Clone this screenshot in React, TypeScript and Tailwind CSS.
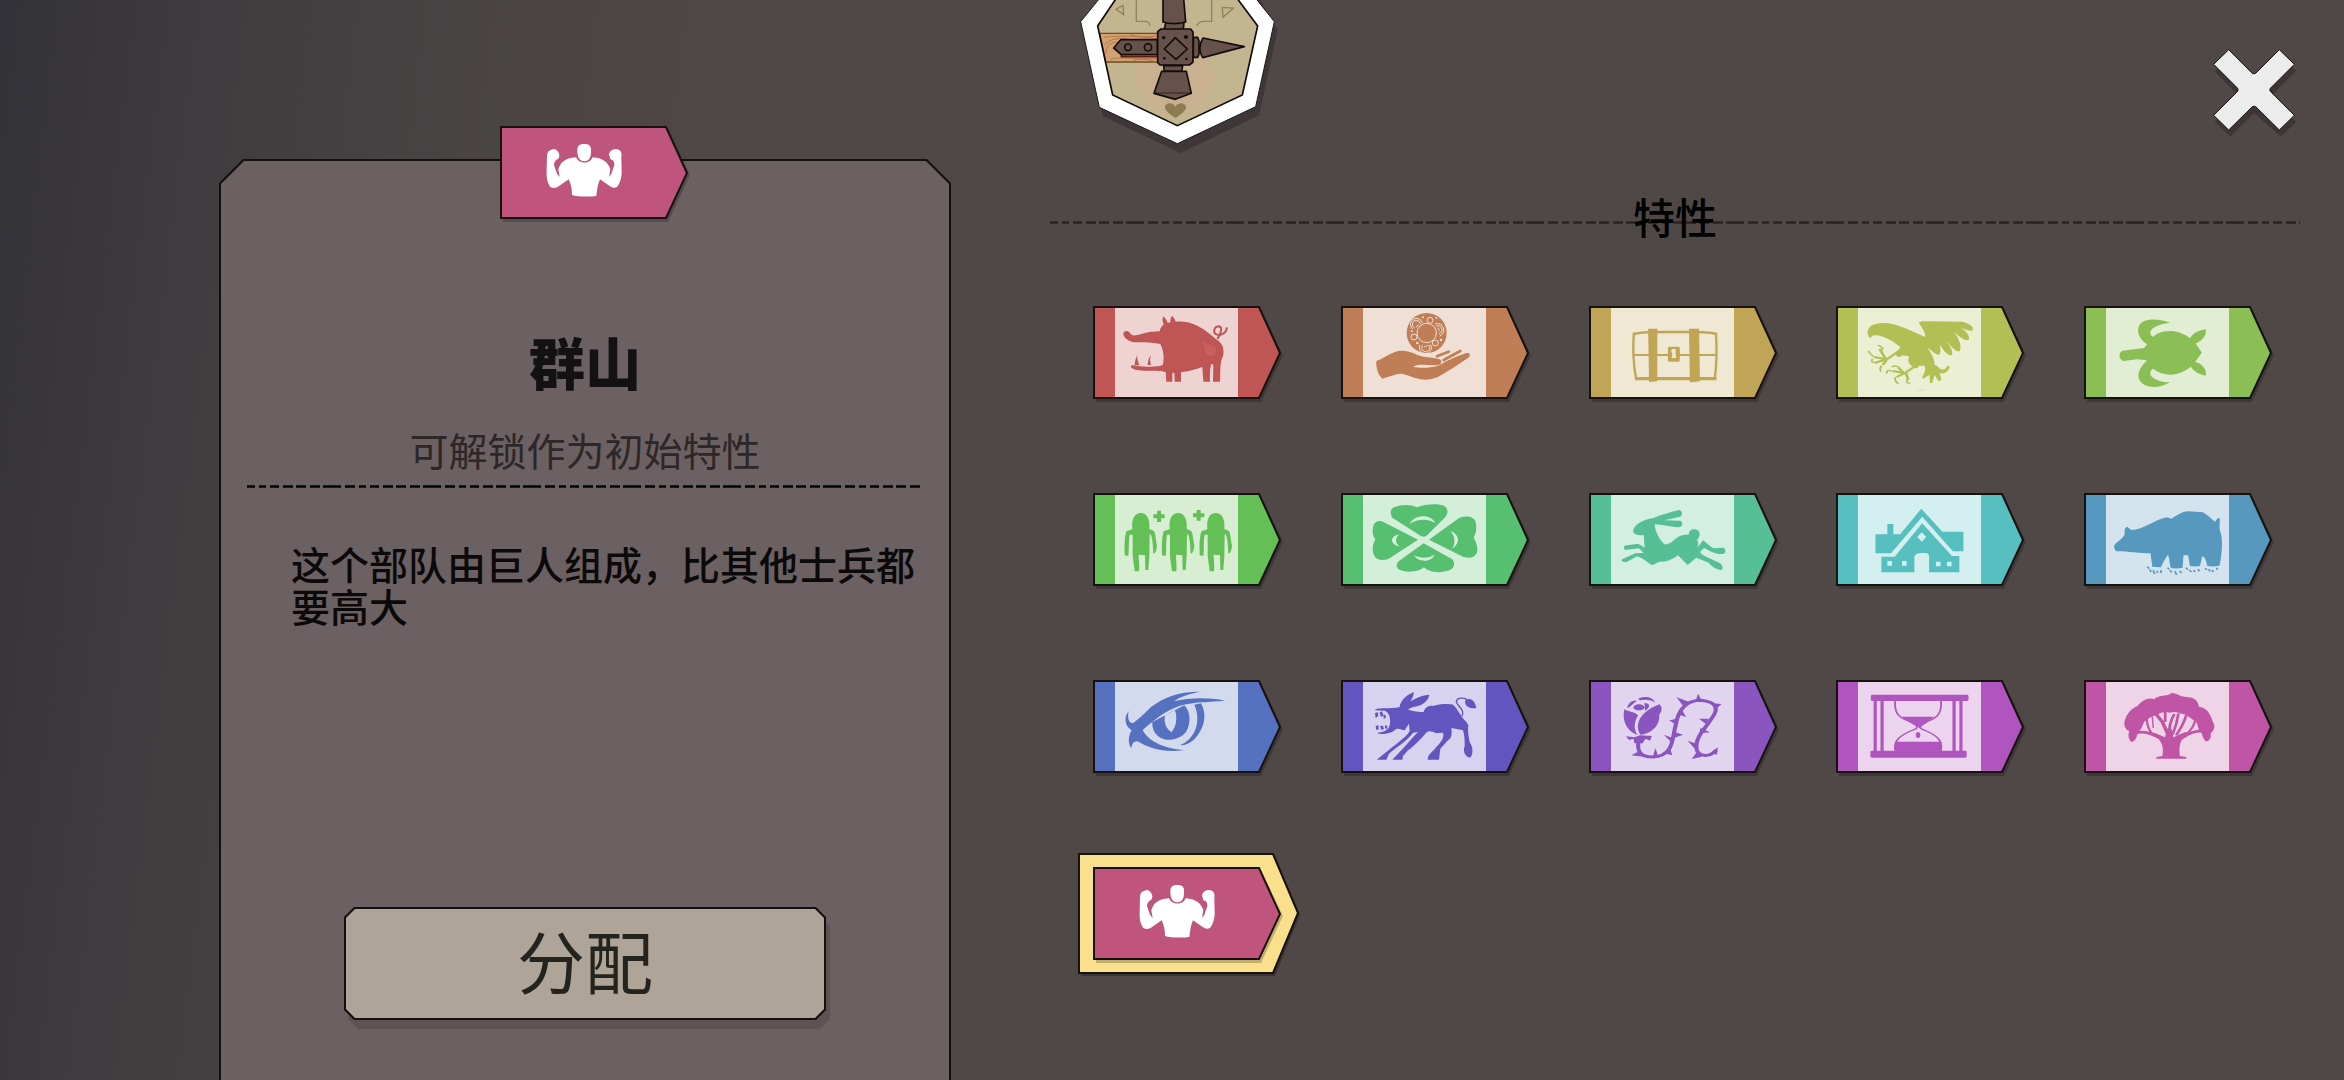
import type { ReactNode } from "react";

type Trait = {
  name: string;
  color: string;
  light: string;
  viewBox: string;
  art: ReactNode;
};

const person =
  "M159 150C156 115 168 101 184 101C202 101 213 118 210 150C222 152 228 156 229 175L233 200C232 212 228 225 222 222C220 205 222 185 214 165L211 165L210 228C210 240 208 255 207 272L198 272L197 228L178 226C178 245 181 260 179 276L166 276C164 255 160 240 160 225L160 166L151 166C147 185 150 205 147 230L136 228C135 200 135 175 141 156Z";

const giant: Trait = {
  name: "群山",
  color: "#bf557d",
  light: "#bf557d",
  viewBox: "102 87 564 279",
  art: (
    <g fill="#fff">
      <path d="M334 160C334 145 342 141 355 141C368 141 376 145 375 160C376 180 370 193 355 193C340 193 334 180 334 160Z" />
      <path d="M330 181C338 202 372 202 380 181C410 183 425 195 433 216L429 240L436 230L445 205C446 195 442 189 434 187C430 185 434 180 429 175C430 162 438 157 450 156C464 158 468 165 466 180L467 225C467 245 460 262 453 270C445 274 438 272 432 268L402 247C395 262 393 280 391 296C375 300 335 300 318 294C318 275 315 262 308 247L278 268C270 274 260 274 253 270C243 255 241 240 242 220L243 175C245 162 252 158 265 156C276 160 284 172 278 184C268 190 264 195 264 205L273 230L281 240L277 217C283 198 295 183 330 181Z" />
    </g>
  ),
};

const traits: Trait[] = [
  {
    name: "野猪",
    color: "#bf5554",
    light: "#efd3d3",
    viewBox: "41 49 564 279",
    art: (
      <>
        <path d="M132 132C134 122 146 122 152 130C156 138 166 140 185 133C205 127 225 125 241 125C244 112 250 107 253 104C248 95 250 86 251 80C258 85 263 92 265 100L274 97C271 90 276 82 278 78C284 84 288 90 289 96C310 94 335 98 355 109C375 119 395 135 412 150C430 160 436 178 431 200C426 210 424 220 423 240L422 276L401 276L402 225L396 222C393 230 391 250 392 276L372 276L369 232C350 240 325 245 305 248L305 276L286 276L285 250L279 249L279 276L261 276L259 247C245 243 235 244 215 243C190 244 160 243 155 232C154 226 160 226 170 228C200 232 235 233 250 226C256 205 252 180 243 163C220 158 195 157 165 158C150 155 132 145 132 132Z" />
        <path
          d="M414 148C420 138 428 125 425 114C420 107 408 110 405 120C402 132 412 138 425 135C436 131 442 124 443 113"
          fill="none"
          stroke="#bf5554"
          strokeWidth="6"
        />
        <path d="M166 226C167 215 168 207 173 198C174 208 176 216 180 227ZM205 226C206 212 208 205 215 197C211 207 212 217 215 226Z" />
        <path d="M370 153L385 163L412 175L405 195L390 200L378 188Z" fill="#c66160" />
      </>
    ),
  },
  {
    name: "施舍",
    color: "#bf7e55",
    light: "#efdfd4",
    viewBox: "784 49 564 279",
    art: (
      <>
        <circle cx="1041" cy="130" r="60" />
        <g fill="none" stroke="#efdfd4" strokeWidth="3">
          <circle cx="1041" cy="130" r="29" />
          <circle cx="1051" cy="92" r="9" />
          <circle cx="1003" cy="142" r="9" />
          <circle cx="1067" cy="160" r="9" />
          <path d="M999 118A18 18 0 1 1 1028 100M1005 115A12 12 0 1 1 1022 104M1011 113A6 6 0 0 1 1017 107" />
          <path d="M1066 103A18 18 0 1 1 1080 139M1069 110A12 12 0 1 1 1078 132M1073 115A6 6 0 0 1 1077 125" />
          <path d="M1053 165A18 18 0 1 1 1021 166M1047 166A12 12 0 1 1 1028 168M1043 167A6 6 0 0 1 1033 169" />
        </g>
        <g fill="#efdfd4">
          <circle cx="1030" cy="83" r="3" />
          <circle cx="1070" cy="84" r="3" />
          <circle cx="996" cy="124" r="3" />
          <circle cx="1013" cy="160" r="4" />
          <circle cx="1084" cy="151" r="4" />
        </g>
        <path d="M890 214C910 208 930 190 955 184C980 180 1000 188 1015 197C1035 205 1065 202 1083 210C1090 220 1080 228 1060 227C1040 227 1020 222 1000 231C1020 236 1050 235 1075 228C1085 225 1092 218 1100 215C1125 203 1145 195 1160 190C1172 188 1174 198 1165 205C1135 225 1105 245 1075 262C1050 272 1030 272 1010 266C990 260 975 252 962 252C945 254 925 262 908 267C895 255 889 235 890 214Z" />
        <path
          d="M1072 200L1107 186M1092 211L1142 184"
          stroke="#bf7e55"
          strokeWidth="8"
          strokeLinecap="round"
        />
      </>
    ),
  },
  {
    name: "宝箱",
    color: "#bfa555",
    light: "#efe8d3",
    viewBox: "41 49 410 279",
    art: (
      <>
        <g fill="none" stroke="#bfa555" strokeWidth="5">
          <path d="M139 130C136 175 138 225 144 270M318 130C320 180 320 225 315 268" />
          <path d="M137 196H317" strokeWidth="6" />
          <path d="M137 133C160 126 180 127 228 127S300 126 320 133" strokeWidth="8" />
          <path d="M141 267H319" strokeWidth="10" />
        </g>
        <path d="M170 117H190V275L172 277ZM259 117H281L283 275L261 278Z" />
        <rect x="213" y="171" width="26" height="45" rx="4" />
        <path d="M222 178H230V193L231 205H221L223 193L220 184Z" fill="#efe8d3" />
      </>
    ),
  },
  {
    name: "猎鹰",
    color: "#b1bf55",
    light: "#ebefd4",
    viewBox: "580 49 410 279",
    art: (
      <>
        <path d="M649 130C648 108 665 98 690 100C720 105 745 125 775 142C775 125 765 110 761 100C762 95 768 95 780 95L855 96C870 100 882 112 878 122C872 126 860 118 852 114C865 125 875 142 868 152C855 152 845 135 838 128C848 145 855 170 850 184C840 190 828 165 822 152C828 170 836 185 833 196C822 200 812 175 806 165C808 178 810 190 804 195C795 195 788 180 780 175C790 195 795 210 795 225L803 232C810 245 822 240 822 228L828 230C826 248 815 254 806 250L810 272L803 274L795 255L790 280L785 280L784 255L770 268L768 262C775 245 776 235 773 228L762 228C755 240 750 235 748 232C738 222 735 212 740 200L725 197C715 208 708 200 712 185C718 178 722 175 718 170C705 155 690 143 670 137C660 135 655 140 657 146C652 143 649 137 649 130Z" />
        <g fill="none" stroke="#b1bf55" strokeWidth="6">
          <path d="M714 187L688 212M688 206L675 178M688 208L663 202M690 208L665 220M690 212L682 226" />
          <path d="M681 182C684 174 678 169 671 167M662 200C656 196 653 188 650 184M665 218C658 220 656 212 660 208M680 228C674 234 676 240 678 246" strokeWidth="4" />
          <path d="M750 232L728 252M728 250L716 234M728 250L704 244M728 252L712 262M732 250L738 270" />
          <path d="M718 234C712 228 706 228 702 232M702 246C694 238 690 244 690 252M710 262C706 270 710 276 716 282M736 268C732 276 736 282 742 280" strokeWidth="4" />
        </g>
        <path d="M758 301H776" stroke="#d6dea4" strokeWidth="2" />
      </>
    ),
  },
  {
    name: "海龟",
    color: "#8bbf55",
    light: "#e1eed4",
    viewBox: "1119 49 410 279",
    art: (
      <>
        <path d="M1256 165C1270 130 1290 123 1310 124C1335 127 1352 145 1362 160L1376 189L1366 208C1350 240 1330 255 1305 255C1280 253 1262 235 1255 212L1235 209L1205 214C1195 208 1193 190 1203 183L1250 175Z" />
        <path d="M1258 165C1240 150 1232 125 1240 105C1250 88 1275 84 1307 99C1290 102 1268 110 1264 125C1262 138 1270 145 1279 148Z" />
        <path d="M1256 213C1240 232 1234 255 1240 272C1250 295 1280 300 1307 278C1290 278 1268 270 1264 255C1262 243 1268 238 1276 233Z" />
        <path d="M1348 152C1355 130 1370 122 1385 119C1386 135 1380 152 1362 162ZM1348 224C1357 245 1370 255 1385 258C1386 240 1380 225 1362 216Z" />
      </>
    ),
  },
  {
    name: "人多势众",
    color: "#64bf57",
    light: "#d7eed2",
    viewBox: "41 41 564 279",
    art: (
      <>
        <path d={person} />
        <path d={person} transform="translate(112)" />
        <path d={person} transform="translate(225)" />
        <path
          d="M222 111H256M239 94V128M341 108H375M358 92V124"
          stroke="#64bf57"
          strokeWidth="12"
        />
      </>
    ),
  },
  {
    name: "四叶草",
    color: "#57bf70",
    light: "#d3efda",
    viewBox: "784 41 564 279",
    art: (
      <>
        <path d="M1020 168L938 115C930 100 932 88 945 83C965 76 990 74 1012 84C1035 74 1070 72 1090 78C1108 86 1106 105 1095 115L1040 170Q1030 175 1020 168Z" />
        <path d="M1048 181L1135 118C1150 108 1180 108 1187 125C1192 145 1190 160 1182 175C1190 190 1196 205 1192 220C1180 240 1165 236 1150 232Z" />
        <path d="M1032 192L1118 240C1126 250 1125 262 1115 270C1095 280 1055 285 1033 264C1015 280 975 280 957 270C948 262 950 252 958 245Z" />
        <path d="M1015 181L910 127C895 122 882 128 880 145C877 160 880 170 887 180C878 195 877 215 884 230C890 242 905 245 925 240Z" />
        <path
          d="M990 133C1005 105 1055 103 1067 132C1050 118 1015 117 990 133ZM1003 228C1015 250 1055 250 1065 226C1048 237 1022 238 1003 228ZM958 165C930 172 930 195 960 202C945 190 947 178 958 165ZM1113 155C1140 165 1143 192 1118 208C1128 190 1126 172 1113 155Z"
          fill="#d3efda"
        />
      </>
    ),
  },
  {
    name: "野兔",
    color: "#57bf96",
    light: "#d3efe3",
    viewBox: "41 41 410 279",
    art: (
      <path d="M137 155C140 135 160 120 180 117C200 105 220 98 238 92C246 95 245 108 240 112L205 123L240 124C248 130 245 142 236 144C215 142 200 136 184 135C186 160 195 180 205 195C220 198 228 175 240 170C248 165 255 168 259 165C258 152 268 147 278 152C285 160 283 172 277 182C280 190 280 198 277 205L290 183C298 190 302 200 312 207L335 205C341 212 338 222 333 224C318 226 300 212 292 206L283 218C290 232 310 240 325 250C334 258 334 268 330 272C318 270 305 258 302 250L275 235L256 257L235 228C225 240 205 250 195 247L178 258L160 240C150 232 145 228 140 235L122 249C112 248 108 242 118 237L142 222L160 221L150 207L120 212C114 205 118 197 125 198L148 193L163 205C160 190 162 175 160 167C150 170 138 165 137 155Z" />
    ),
  },
  {
    name: "家园",
    color: "#57bfbf",
    light: "#d3efef",
    viewBox: "580 41 410 279",
    art: (
      <>
        <path d="M666 165H692V134H705V165H720L766 88L812 157H858V216H835L768 112L700 222H666Z" />
        <path d="M768 132L833 230H849V279H783V230C783 222 778 221 770 221C757 221 751 225 751 235V279H679V232H708Z" />
        <path
          d="M767 159L777 173L767 187L757 173ZM692 245H702V259H692ZM724 245H734V259H724ZM798 247H808V261H798ZM822 247H832V261H822Z"
          fill="#d3efef"
        />
      </>
    ),
  },
  {
    name: "巨熊",
    color: "#5798bf",
    light: "#d3e4ef",
    viewBox: "1119 41 410 279",
    art: (
      <>
        <path d="M1185 200C1186 190 1200 185 1208 165C1206 150 1210 142 1214 143L1222 152C1250 152 1270 122 1300 114L1310 118C1325 105 1335 95 1348 96L1378 99C1388 105 1395 118 1405 127C1410 115 1415 113 1415 118C1416 135 1413 145 1416 155C1422 180 1421 215 1415 258C1410 262 1400 262 1388 260C1385 245 1384 235 1377 231L1372 260C1365 262 1358 262 1350 260L1346 228L1336 228L1334 265C1325 268 1315 268 1308 265C1305 245 1305 235 1302 226C1296 240 1290 250 1287 264L1268 262L1264 222C1240 222 1210 215 1190 216C1186 212 1184 205 1185 200Z" />
        <path
          d="M1257 262l4 6M1263 271l2 7M1270 273l3 11M1278 274l2 6M1287 273v8M1301 265l4 5M1307 273l3 6M1317 276l4 10M1328 274l3 7M1341 265l5 6M1349 272l4 6M1358 272l3 6M1368 269l2 7M1383 266l4 6M1391 270l3 6M1398 272l3 6M1409 265v6"
          stroke="#5798bf"
          strokeWidth="4"
        />
      </>
    ),
  },
  {
    name: "鹰眼",
    color: "#5571bf",
    light: "#d4daee",
    viewBox: "41 34 564 279",
    art: (
      <>
        <path d="M148 127C143 150 150 165 162 163C180 150 200 130 215 115C255 85 300 68 364 69C330 75 300 85 284 98C330 86 390 86 437 96C390 100 350 100 320 107C270 118 235 145 190 184C205 215 250 240 315 244C260 254 210 240 175 218C160 218 158 228 156 239C145 225 147 200 157 185C140 175 130 150 148 127Z" />
        <path d="M219 160L315 110C335 130 335 165 320 190C300 215 260 220 240 205C225 195 218 180 219 160Z" />
        <path d="M257 140L287 125C295 150 290 175 276 191C262 180 252 165 257 140Z" fill="#d4daee" />
        <path d="M345 108L365 104C385 140 375 180 345 212C330 225 315 232 303 229C340 215 370 165 345 108Z" />
      </>
    ),
  },
  {
    name: "倔驴",
    color: "#6255bf",
    light: "#d7d2ef",
    viewBox: "784 34 564 279",
    art: (
      <>
        <path d="M887 122C900 115 930 122 960 115C962 100 975 80 1003 70C1000 90 990 105 978 114C990 95 1020 80 1049 78C1045 100 1025 112 1000 115L985 122C1000 130 1020 130 1032 130C1035 115 1050 108 1062 112C1080 105 1105 105 1120 108C1135 120 1140 140 1160 160L1166 170C1164 185 1166 200 1170 220C1180 235 1182 255 1172 267C1158 265 1148 250 1155 232C1155 215 1155 200 1150 185L1115 178C1118 195 1115 210 1105 215L1082 240L1078 273H1044C1045 255 1060 250 1070 235C1085 220 1095 205 1090 192L1070 194C1058 188 1050 185 1042 190C1020 215 1000 235 985 245L970 262L968 273H938L960 250C980 230 1000 205 1015 190L1000 192C985 215 950 235 928 255L920 273H891L920 250C950 225 975 210 990 188L988 165L975 185C965 185 955 175 945 185C930 198 900 198 893 193C905 190 925 190 930 170C935 150 928 130 915 126L887 125Z" />
        <path d="M886 134l8 -4l2 12l-8 6ZM899 132l8 -4l4 12l-6 5ZM911 138l6 0l2 10l-7 2ZM888 172l8 -3l1 13l-7 2ZM901 172l9 -1l3 10l-8 3ZM916 170l7 1l-1 10l-6 -2Z" />
        <path
          d="M1146 143C1158 125 1135 115 1130 100C1130 88 1145 85 1162 92"
          fill="none"
          stroke="#6255bf"
          strokeWidth="4"
        />
        <path d="M1157 95C1170 86 1185 92 1190 118C1175 122 1152 115 1157 95Z" />
      </>
    ),
  },
  {
    name: "荆棘玫瑰",
    color: "#8a55bf",
    light: "#e1d4ee",
    viewBox: "41 34 410 279",
    art: (
      <>
        <path d="M118 122C128 130 142 130 148 140C139 160 138 182 147 199C126 190 112 160 118 122ZM195 107C202 118 200 130 194 138C197 165 180 195 153 198C140 170 150 130 195 107Z" />
        <path d="M125 119C124 105 136 94 145 96L132 112ZM148 90C160 80 182 84 185 102C175 92 165 92 152 95ZM162 103C175 104 176 116 163 126Z" />
        <ellipse cx="150" cy="116" rx="12" ry="9" />
        <path d="M122 203L140 206L152 200L178 202L174 216L164 210L158 224L140 224L138 210L128 214Z" />
        <g fill="none" stroke="#8a55bf" strokeWidth="9">
          <path d="M150 215C144 245 152 265 180 265C228 262 222 205 230 170C236 120 255 95 285 95C320 100 325 120 308 150C295 180 275 200 275 235C276 265 305 268 318 245" />
        </g>
        <path d="M245 110L232 86L260 100ZM274 94L279 75L286 94ZM310 104L330 106L318 122ZM233 150L216 155L229 167ZM241 118L253 145L237 138ZM302 150L281 150L296 166ZM284 178L305 191L282 194ZM276 225L256 216L272 240ZM222 222L204 198L228 210ZM228 190L246 198L226 208ZM180 264L186 238L192 264ZM204 254L223 260L216 234ZM150 248L133 260L160 264ZM275 252L265 271L288 264ZM306 252L322 236L320 258Z" />
      </>
    ),
  },
  {
    name: "沙漏",
    color: "#b055bf",
    light: "#ecd3ee",
    viewBox: "580 34 410 279",
    art: (
      <>
        <rect x="656" y="78" width="213" height="19" rx="4" />
        <rect x="655" y="246" width="210" height="21" rx="4" />
        <path d="M662 97h7v150h-7ZM677 97h7v150h-7ZM834 97h7v150h-7ZM849 97h7v150h-7Z" />
        <g fill="none" stroke="#b055bf" strokeWidth="4">
          <path d="M709 97C707 130 715 145 735 155L755 170C759 178 755 180 748 184C720 200 705 215 709 246" />
          <path d="M809 97C811 130 803 145 785 155L765 170C761 178 765 180 772 184C800 200 813 215 809 246" />
        </g>
        <path d="M722 144H794L762 178ZM709 219H810V248H709Z" />
        <ellipse cx="759" cy="199" rx="5" ry="9" />
      </>
    ),
  },
  {
    name: "大树",
    color: "#bf55a4",
    light: "#efd3e7",
    viewBox: "1119 34 410 279",
    art: (
      <>
        <path d="M1222 220C1215 210 1215 195 1218 188C1205 180 1205 160 1210 148C1215 130 1225 118 1236 112C1245 95 1260 85 1272 92C1280 78 1300 84 1310 73C1325 75 1330 85 1343 85C1360 85 1368 98 1370 115C1385 115 1395 135 1400 160C1408 175 1400 188 1395 195C1398 210 1390 218 1385 218C1378 210 1378 200 1374 190C1366 186 1370 170 1362 158C1352 150 1346 140 1334 136C1322 130 1316 128 1306 132C1296 128 1288 130 1278 140C1266 142 1258 152 1250 160C1246 172 1244 184 1236 190C1235 210 1228 220 1222 220Z" />
        <path d="M1277 265L1290 262C1293 240 1290 225 1282 212L1262 196L1272 192L1296 206L1300 180H1310L1314 206L1340 190L1350 196L1332 214C1326 230 1327 248 1328 262L1342 265V270H1277Z" />
        <g fill="none" stroke="#bf55a4" strokeWidth="6">
          <path d="M1232 192Q1255 186 1275 202M1384 188Q1358 184 1336 204" strokeWidth="8" />
          <path d="M1256 150Q1256 175 1268 196M1362 152Q1358 178 1344 194" strokeWidth="5" />
          <path d="M1276 136L1290 160L1303 200" strokeWidth="8" />
          <path d="M1296 130V160M1306 200Q1302 170 1316 136M1325 134Q1322 165 1312 198M1342 140Q1336 168 1320 200" />
          <path d="M1268 144L1270 178" strokeWidth="3" />
        </g>
      </>
    ),
  },
  giant,
];

function TraitFlag({ trait, selected = false }: { trait: Trait; selected?: boolean }) {
  return (
    <svg viewBox="0 0 188 93" className="block h-[93px] w-[188px] overflow-visible" aria-hidden="true">
      {selected && (
        <>
          <path d="M-12 -11H182L207 48L182 109H-12Z" fill="#3a3333" />
          <path d="M-14 -13H180L205 46L180 106H-14Z" fill="#fadf8d" stroke="#17120c" strokeWidth="2" />
        </>
      )}
      <path d="M3 3H168L190 49L168 96H3Z" fill="#000" opacity="0.22" />
      <path d="M1 1H166L187 47L166 92H1Z" fill={trait.color} />
      <path d="M22 1H145V92H22Z" fill={trait.light} />
      <svg width="188" height="93" viewBox={trait.viewBox} preserveAspectRatio="none" fill={trait.color}>
        {trait.art}
      </svg>
      <path d="M1 1H166L187 47L166 92H1Z" fill="none" stroke="#17120f" strokeWidth="2" />
    </svg>
  );
}

function DashedRule({ className }: { className: string }) {
  return (
    <svg className={`block h-[3px] w-full ${className}`} aria-hidden="true">
      <line
        x1="0"
        y1="1.5"
        x2="100%"
        y2="1.5"
        stroke="currentColor"
        strokeWidth="2.5"
        strokeDasharray="10 4 7 4 9 4 10 3 10 4 10 3 18 4"
        strokeDashoffset="2"
      />
    </svg>
  );
}

function Medal() {
  return (
    <svg viewBox="0 0 720 480" className="block h-[160px] w-[240px]" aria-hidden="true">
      <path d="M130 0L72 92L128 348L362 459L597 346L653 90L600 0Z" fill="#3e3637" />
      <path
        d="M118 -4L62 65L118 322L352 431L587 320L643 65L588 -4Z"
        fill="#fff"
        stroke="#1b1818"
        strokeWidth="3"
      />
      <path d="M168 -4L113 78L158 285L352 377L547 285L593 78L532 -4Z" fill="#c3b590" />
      <ellipse cx="345" cy="225" rx="115" ry="120" fill="#cbae91" opacity="0.6" />
      <g fill="none" stroke="#8f8358" strokeWidth="4">
        <path d="M229 0V64H258Q268 66 270 78M455 0V64H428Q414 66 411 78M189 16L168 28L191 44ZM487 22L520 24L489 52Z" />
      </g>
      <path d="M119 100H295V186H137Z" fill="#d3a274" stroke="#6d4d21" strokeWidth="4" />
      <path
        d="M130 112C170 106 230 108 290 116M133 135C150 115 180 112 205 118M137 160C140 130 165 122 178 130M150 180C170 168 200 178 290 176M220 182Q250 172 285 184M210 104Q240 114 288 108"
        fill="none"
        stroke="#b67648"
        strokeWidth="3"
      />
      <g fill="#67514b" stroke="#120d0c" strokeWidth="5" strokeLinejoin="round">
        <path d="M184 164V170H292" fill="none" stroke="#5c1d18" />
        <path d="M182 119H292V164H184L161 144Z" />
        <path d="M318 66H372L370 90H312Z" />
        <path d="M309 -4V66Q340 76 377 66L371 -4Z" />
        <path d="M400 112H413L417 124V162L413 172H400Z" />
        <path d="M429 114L553 140L428 173Q410 145 429 114Z" />
        <path d="M311 197H368L365 214H313Z" />
        <path d="M305 214H379L394 280L346 298L282 280Z" />
        <path d="M286 279H393" strokeWidth="2" />
        <path d="M303 87H392L399 96V186L388 195H300L293 188V95Z" />
        <path d="M346 113L382 147L348 178L313 147Z" />
        <circle cx="204" cy="142" r="10" />
        <circle cx="264" cy="142" r="11" />
      </g>
      <g fill="#120d0c">
        <circle cx="311" cy="113" r="5" />
        <circle cx="378" cy="111" r="6" />
        <circle cx="313" cy="175" r="4" />
        <circle cx="379" cy="177" r="4" />
      </g>
      <path d="M346 354C328 342 314 330 315 320C318 306 340 306 346 320C352 306 376 306 378 320C378 332 362 344 346 354Z" fill="#8c7c50" />
      <path
        d="M168 -4L113 78L158 285L352 377L547 285L593 78L532 -4"
        fill="none"
        stroke="#0d0a09"
        strokeWidth="5"
      />
    </svg>
  );
}

function DetailPanel() {
  return (
    <section className="flex flex-col pt-[126px]">
      {/* flag overlaps the top edge of the card */}
      <div className="z-10 -mb-[60px] flex justify-center pl-[18px]">
        <TraitFlag trait={giant} />
      </div>
      <div className="flex grow bg-[#14100f] px-[2px] pt-[2px] [clip-path:polygon(24px_0,calc(100%-24px)_0,100%_24px,100%_100%,0_100%,0_24px)]">
        <div className="flex grow flex-col bg-[#6b6062] px-[26px] [clip-path:polygon(23px_0,calc(100%-23px)_0,100%_23px,100%_100%,0_100%,0_23px)]">
          <h1 className="mt-[160px] text-center text-[56px] leading-[80px] font-black text-[#131111]">
            群山
          </h1>
          <p className="mt-[20px] text-center text-[39px] leading-[56px] text-[#2d2728]">
            可解锁作为初始特性
          </p>
          <DashedRule className="mt-2 text-black" />
          <p className="mt-[54px] pl-[44px] text-[39px] leading-[42px] font-medium text-[#0b0909]">
            这个部队由巨人组成，比其他士兵都要高大
          </p>
          <div className="mt-auto mb-[60px] flex justify-center drop-shadow-[4px_9px_0_#5f5253]">
            <button
              type="button"
              className="flex bg-[#14100f] p-[2px] [clip-path:polygon(10px_0,calc(100%-10px)_0,100%_10px,100%_calc(100%-10px),calc(100%-10px)_100%,10px_100%,0_calc(100%-10px),0_10px)]"
            >
              <span className="w-[478px] bg-[#aea598] pb-2 text-center text-[68px] leading-[101px] text-[#24231e] [clip-path:polygon(9px_0,calc(100%-9px)_0,100%_9px,100%_calc(100%-9px),calc(100%-9px)_100%,9px_100%,0_calc(100%-9px),0_9px)]">
                分配
              </span>
            </button>
          </div>
        </div>
      </div>
    </section>
  );
}

function TraitPicker() {
  return (
    <section>
      <header className="flex h-[186px] items-start justify-between pr-1 pl-[10px]">
        <Medal />
        <button type="button" aria-label="关闭" className="mt-[49px]">
          <svg viewBox="69 57 249 264" className="block h-[88px] w-[83px]">
            <path d="M121 78L74 124L144 196L74 276L121 320L192 249L273 320L318 276L246 196L318 122L273 78L192 150Z" fill="#3d3536" />
            <path
              d="M116 59L71 103L143 175Q145 180 143 184L71 256L116 300L187 230Q192 227 197 230L268 300L313 256L241 184Q238 180 241 175L313 103L268 59L197 130Q192 133 187 130Z"
              fill="#ececec"
              stroke="#151111"
              strokeWidth="3"
            />
          </svg>
        </button>
      </header>
      <div className="grid items-center">
        <DashedRule className="col-start-1 row-start-1 mt-2 text-[#292323]" />
        <h2 className="col-start-1 row-start-1 pb-1 text-center text-[42px] leading-[60px] font-medium text-black">
          特性
        </h2>
      </div>
      <div className="mt-[56px] grid grid-cols-[repeat(5,188px)] justify-between gap-y-[94px] pr-7 pl-[43px]">
        {traits.map((trait) => (
          <button
            key={trait.name}
            type="button"
            aria-label={trait.name}
            aria-pressed={trait === giant}
          >
            <TraitFlag trait={trait} selected={trait === giant} />
          </button>
        ))}
      </div>
    </section>
  );
}

export default function App() {
  return (
    <main className="grid min-h-screen grid-cols-[732fr_1250fr] gap-x-[99px] bg-[#504747] bg-[linear-gradient(97deg,#333238_0,#403c3f_220px,#484343_440px,#504747_720px)] pr-11 pl-[219px] font-['Noto_Sans_CJK_SC',sans-serif]">
      <DetailPanel />
      <TraitPicker />
    </main>
  );
}
